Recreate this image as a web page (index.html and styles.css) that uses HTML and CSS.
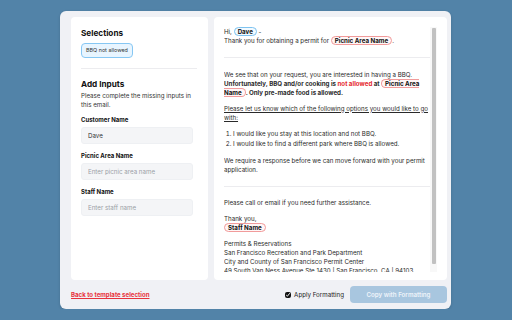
FILE: index.html
```html
<!DOCTYPE html>
<html lang="en">
<head>
    <meta charset="UTF-8">
    <meta name="viewport" content="width=device-width, initial-scale=1.0">
    <title>BBQ Email Template</title>
    <link rel="stylesheet" href="styles.css">
</head>
<body>
    <div class="dialog">
        <div class="panels">
            <div class="side">
                <h2>Selections</h2>
                <div class="chips">
                    <span class="chip">BBQ not allowed</span>
                </div>
                <hr class="divider">
                <h2>Add Inputs</h2>
                <p class="hint">Please complete the missing inputs in this email.</p>
                <div class="field">
                    <label for="customerName">Customer Name</label>
                    <input type="text" id="customerName" value="Dave">
                </div>
                <div class="field">
                    <label for="picnicArea">Picnic Area Name</label>
                    <input type="text" id="picnicArea" placeholder="Enter picnic area name">
                </div>
                <div class="field">
                    <label for="staffName">Staff Name</label>
                    <input type="text" id="staffName" placeholder="Enter staff name">
                </div>
            </div>
            <div class="preview">
                <div class="email">
                    <div class="section first">
                        <p>Hi, <span class="tag filled">Dave</span> -<br>
                        Thank you for obtaining a permit for <span class="tag empty">Picnic Area Name</span>.</p>
                    </div>
                    <div class="section">
                        <p>We see that on your request, you are interested in having a BBQ.
                        <b>Unfortunately, BBQ and/or cooking is <span class="warn">not allowed</span> at <span class="tag empty">Picnic Area Name</span>. Only pre-made food is allowed.</b></p>
                        <p class="ask">Please let us know which of the following options you would like to go with:</p>
                        <ol>
                            <li>I would like you stay at this location and not BBQ.</li>
                            <li>I would like to find a different park where BBQ is allowed.</li>
                        </ol>
                        <p>We require a response before we can move forward with your permit application.</p>
                    </div>
                    <div class="section last">
                        <p>Please call or email if you need further assistance.</p>
                        <p>Thank you,<br><span class="tag empty">Staff Name</span></p>
                        <p>Permits &amp; Reservations<br>
                        San Francisco Recreation and Park Department<br>
                        City and County of San Francisco Permit Center<br>
                        49 South Van Ness Avenue Ste 1430 | San Francisco, CA | 94103</p>
                    </div>
                </div>
                <div class="scrollbar"><div class="thumb"></div></div>
            </div>
        </div>
        <div class="footer">
            <a href="#" class="back">Back to template selection</a>
            <label class="check"><input type="checkbox" checked> Apply Formatting</label>
            <button class="copy" disabled>Copy with Formatting</button>
        </div>
    </div>
</body>
</html>
```

FILE: styles.css
```css
body {
    margin: 0;
    padding: 11px 0 0 60px;
    background-color: #5283a8;
    font-family: Inter, "Noto Sans", sans-serif;
    color: #222;
}

.dialog {
    width: 391px;
    height: 298px;
    box-sizing: border-box;
    padding: 6px 4px 0 11px;
    background-color: #f0f1f5;
    border-radius: 6px;
    box-shadow: 0 1px 3px rgba(0,0,0,0.15);
    display: flex;
    flex-direction: column;
}

.panels {
    display: flex;
    gap: 6px;
    height: 263px;
}

.side {
    width: 137px;
    box-sizing: border-box;
    padding: 11px 11px 0 10px;
    background-color: white;
    border-radius: 4px;
}

.side h2 {
    font-size: 8.2px;
    line-height: 10px;
    font-weight: 700;
    margin: 0;
    color: #111;
}

.chips {
    display: flex;
    margin-top: 5px;
}

.chip {
    font-size: 5.4px;
    line-height: 7px;
    padding: 3px 4px;
    background-color: #e8f5ff;
    border: 1px solid #86c7f3;
    border-radius: 4px;
    color: #333;
}

.divider {
    border: none;
    border-top: 1px solid #ececef;
    margin: 9.5px 0 10px;
}

.hint {
    font-size: 6.2px;
    line-height: 9px;
    margin: 2.5px 0 0;
    color: #333;
}

.field {
    margin-top: 7px;
}

.field + .field {
    margin-top: 8.5px;
}

.field label {
    display: block;
    font-size: 6px;
    line-height: 7px;
    font-weight: 700;
    color: #111;
    margin-bottom: 3.5px;
}

.field input {
    display: block;
    width: 112px;
    height: 17px;
    box-sizing: border-box;
    padding: 0 6px;
    font-family: inherit;
    font-size: 6.2px;
    color: #333;
    background-color: #f4f5f7;
    border: 1px solid #eef0f3;
    border-radius: 3px;
    outline: none;
}

.field input::placeholder {
    color: #9a9ea6;
}

.preview {
    width: 233px;
    box-sizing: border-box;
    padding: 10px 10px 8px 10px;
    background-color: white;
    border-radius: 4px;
    display: flex;
}

.email {
    flex: 1;
    height: 245px;
    overflow: hidden;
    font-size: 6.2px;
    line-height: 9px;
    color: #2a2a2a;
}

.scrollbar {
    width: 7px;
    height: 245px;
    box-sizing: border-box;
    padding: 1px 1px 8px 2px;
    background-color: #f8f8f8;
}

.thumb {
    height: 100%;
    background-color: #c1c1c1;
    border-radius: 1px;
}

.section {
    padding: 11.5px 0;
    border-bottom: 1px solid #ececef;
}

.section.first {
    padding-top: 0;
    padding-bottom: 12px;
}

.section.last {
    border-bottom: none;
}

.section p {
    margin: 0 0 7px;
}

.section p:last-child {
    margin-bottom: 0;
}

.ask {
    text-decoration: underline;
}

.warn {
    color: #e5262d;
}

.tag {
    font-weight: 700;
    padding: 0 3px;
    border-radius: 5px;
    color: #111;
}

.tag.filled {
    background-color: #f2faff;
    border: 1px solid #7ec3f0;
}

.tag.empty {
    background-color: #fff6f6;
    border: 1px solid #f19b9b;
}

ol {
    margin: 0 0 8px;
    padding-left: 9px;
}

li {
    margin-bottom: 1.5px;
}

.footer {
    flex: 1;
    display: flex;
    align-items: center;
}

.back {
    font-size: 6.1px;
    font-weight: 700;
    color: #e8323c;
    text-decoration: underline;
    margin-right: auto;
}

.check {
    display: flex;
    align-items: center;
    gap: 3px;
    font-size: 6.2px;
    color: #222;
    margin-right: 6px;
}

.check input {
    width: 6px;
    height: 6px;
    margin: 0;
    accent-color: #111;
}

.copy {
    width: 97px;
    height: 17px;
    font-family: inherit;
    font-size: 6.2px;
    font-weight: 600;
    color: #eef4fa;
    background-color: #a8c6df;
    border: none;
    border-radius: 4px;
}
```
